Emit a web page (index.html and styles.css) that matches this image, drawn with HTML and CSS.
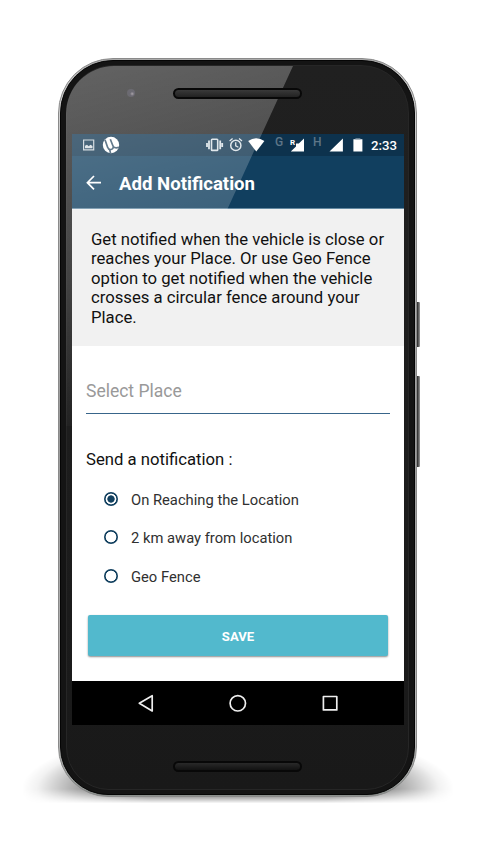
FILE: index.html
```html
<!DOCTYPE html>
<html lang="en">
<head>
<meta charset="utf-8">
<title>Add Notification</title>
<link rel="stylesheet" href="styles.css">
</head>
<body>
<div class="stage">
  <div class="ground-shadow"></div>
  <div class="side-key power"></div>
  <div class="side-key volume"></div>
  <div class="phone">
    <div class="bezel">
      <div class="face">
        <div class="top-face"><i class="camera"></i><div class="speaker"></div></div>
        <main class="screen">
          <div class="status-bar">
            <svg width="332" height="22" viewBox="0 0 332 22">
              <g fill="#fff">
                <path fill="none" stroke="#c8d1d8" stroke-width="1.2" d="M11.6 6h10.1v9.8H11.6z"/>
                <path fill="#d5dce1" d="M13 14.3v-2.6l2-1 1.7 1.5 1.8-1.4 2 1.2v2.3z"/>
                <circle cx="39" cy="11" r="8.2"/>
                <path fill="none" stroke="#2f4f67" stroke-width="1.7" d="M33 5.8l2.6 7.4c1.2 3.6 6.2 2.8 5.6-.9M38.3 5.2l2.6 6.5c.9 2.3 3.1 2.5 6.1 1.6M37.6 15.4l1 4"/>
                <g fill="none" stroke="#d9e1e6">
                  <rect x="139.5" y="5.2" width="6.2" height="11.2" rx=".7" stroke-width="1.6"/>
                  <path stroke-width="1.8" d="M137 6.5v8.8M148.2 6.5v8.8M135 9v4M150.2 9v4"/>
                  <circle cx="163.8" cy="11.4" r="5.1" stroke-width="1.5"/>
                  <path stroke-width="1.3" d="M157.6 7l3-2.5M170 7l-3-2.5M163.7 8.3v3.5l2.7 1.5"/>
                </g>
                <path d="M176.2 6.9Q184.3 1.8 192.4 6.9L184.3 17.6z"/>
                <path d="M232 4.4V17.6H218.8L224 12.4V9.6h2.8z"/>
                <path d="M270.9 4.4V17.6H257.5zM281.4 5.2h9v12.4h-9z"/>
                <path fill="#647c8e" d="M283.4 3.9h5v1.3h-5z"/>
              </g>
            </svg>
            <span class="net g">G</span><span class="net r">R</span><span class="net h">H</span>
            <time>2:33</time>
          </div>
          <header class="toolbar">
            <svg width="16" height="16" viewBox="0 0 16 16" fill="none" stroke="#fff" stroke-width="1.7"><path d="M15 7.7H1.7M8 1L1.4 7.7 8 14.4"/></svg>
            <h1>Add Notification</h1>
          </header>
          <p class="info">Get notified when the vehicle is close or<br>reaches your Place. Or use Geo Fence<br>option to get notified when the vehicle<br>crosses a circular fence around your<br>Place.</p>
          <section class="form">
            <div class="place">Select Place</div>
            <h2>Send a notification :</h2>
            <div class="option"><i class="radio on"></i><span>On Reaching the Location</span></div>
            <div class="option"><i class="radio"></i><span>2 km away from location</span></div>
            <div class="option"><i class="radio"></i><span>Geo Fence</span></div>
            <button class="save">SAVE</button>
          </section>
          <nav class="nav">
            <svg width="332" height="44" viewBox="0 0 332 44" fill="none" stroke="#eee" stroke-width="1.7" stroke-linejoin="round"><path d="M80.2 14.7v15.2L67.3 22.3z"/><circle cx="165.8" cy="22.3" r="7.7"/><path d="M251.4 15.5h13.4v13.4h-13.4z"/></svg>
          </nav>
        </main>
        <div class="bottom-face"><div class="speaker"></div></div>
      </div>
    </div>
    <div class="glare"></div>
  </div>
</div>
</body>
</html>
```
FILE: styles.css
```css
* { box-sizing: border-box; }
body { margin: 0; background: #fff; font-family: Roboto, sans-serif; overflow: hidden; }
.stage { position: relative; width: 478px; height: 855px; padding: 58px 0 0 58px; }
.ground-shadow {
  position: absolute; left: 22px; top: 725px; width: 432px; height: 80px;
  background: radial-gradient(ellipse 50% 76% at 50% 80%, rgba(0,0,0,.8) 45%, rgba(0,0,0,.32) 76%, rgba(0,0,0,.05) 93%, transparent);
  -webkit-mask-image: linear-gradient(#000 80%, transparent 98%);
  mask-image: linear-gradient(#000 80%, transparent 98%);
}
.side-key { position: absolute; left: 416px; width: 3.5px; border-radius: 0 1px 1px 0; background: linear-gradient(90deg, #333 35%, #999); }
.power { top: 302px; height: 45px; }
.volume { top: 376px; height: 91px; }

/* Metal rim, dark gasket and glass face */
.phone {
  position: relative; width: 359px; height: 739px; padding: 1px; border: 1px solid #8a8a8a;
  border-radius: 55px 55px 50px 50px;
  background: linear-gradient(#aaa, #d0d0d0 5%, #999 50%, #bbb 92%, #8a8f8c);
}
.bezel { height: 735px; padding: 4px 5px; border-radius: 53px 53px 48px 48px; background: #141414; border: 1px solid #050505; }
.face { height: 725px; border-radius: 48px 48px 43px 43px; background: linear-gradient(#202020, #1d1d1d 50%, #191919); border: 1px solid #262626; overflow: hidden; }
.top-face { height: 68px; padding: 22px 0 0 60px; display: flex; align-items: flex-start; }
.camera { width: 8px; height: 8px; margin-top: 1px; border-radius: 50%; background: radial-gradient(circle at 65% 60%, #89818a, #35333f 30%, #323137); }
.speaker { position: relative; z-index: 1; width: 129px; height: 11px; border-radius: 6px; border: 2px solid #080808; background: linear-gradient(#393939, #222); }
.top-face .speaker { margin-left: 38px; }
.bottom-face { display: flex; padding: 36px 0 0 106px; }
.bottom-face .speaker { background: linear-gradient(#292929, #121212); }

.screen { width: 332px; height: 591px; margin-left: 5px; background: #fff; }
.status-bar { position: relative; height: 22px; background: #0d324d; color: #fff; }
.status-bar svg, .nav svg { display: block; }
.status-bar time { position: absolute; right: 7px; top: 4px; font-size: 13.2px; line-height: 16px; font-weight: 500; }
.net { position: absolute; top: 1px; color: #5e7688; font-size: 12px; line-height: 14px; font-weight: 500; }
.g { left: 203px; }
.h { left: 241px; }
.r { left: 218px; top: 4px; color: #fff; font-size: 8px; line-height: 9px; font-weight: 700; }
.toolbar { height: 53px; padding: 0 14px; display: flex; align-items: center; gap: 17px; background: #113f5f; border-bottom: 1px solid #6489a1; color: #fff; }
.toolbar svg { margin-top: 1px; }
h1 { margin: 3px 0 0; font-size: 18.6px; line-height: 24px; font-weight: 700; white-space: nowrap; }
.info { height: 137px; margin: 0; padding: 21px 0 0 19px; background: #f1f1f1; color: #111; font-size: 16.7px; line-height: 19.4px; white-space: nowrap; }
.form { height: 335px; padding: 32px 14px 0; }
.place { height: 36px; border-bottom: 1px solid #38658a; color: #999; font-size: 17.5px; line-height: 26px; }
h2 { margin: 34px 0 19px; font-size: 16.7px; line-height: 24px; font-weight: 400; color: #111; }
.option { height: 38.3px; margin: 0 0 0 18px; display: flex; align-items: flex-start; gap: 13px; font-size: 14.75px; line-height: 18px; color: #303030; white-space: nowrap; }
.radio { width: 14px; height: 14px; margin-top: 1px; border-radius: 50%; background: radial-gradient(circle, #fff 5px, #12405f 5.7px); }
.on { background: radial-gradient(circle, #12405f 3.3px, #fff 4px 5px, #12405f 5.7px); }
.save { display: block; width: 300px; height: 41px; margin: 9px 0 0 2px; padding: 3px 0 0; border: 0; border-radius: 2px; background: #52b9cd; color: #fff; font: 700 13.1px Roboto, sans-serif; box-shadow: 0 1px 2px rgba(0,0,0,.45); }
.nav { height: 44px; background: #000; }

/* Diagonal reflection across the upper glass */
.glare {
  position: absolute; left: 7px; top: 7px; width: 343px; height: 360px;
  border-radius: 48px 0 0 0;
  clip-path: polygon(0 0, 227px 0, 161px 144px, 6px 144px, 6px 360px, 0 360px);
  background: linear-gradient(165deg, rgba(255,255,255,.3), rgba(255,255,255,.16) 48%, rgba(255,255,255,0) 85%);
}
```
